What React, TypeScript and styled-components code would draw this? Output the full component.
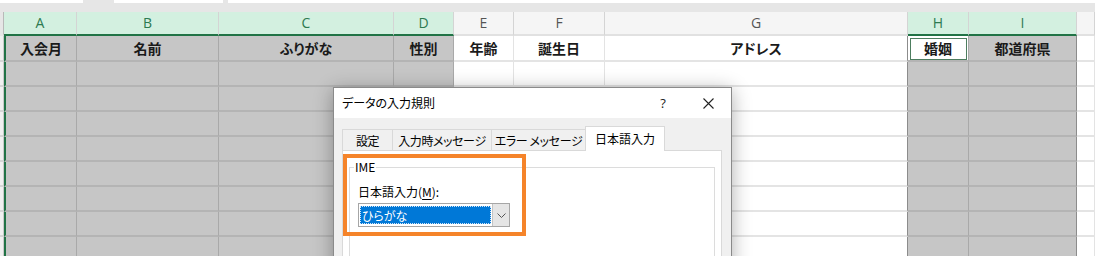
import React from "react";
import styled, { createGlobalStyle, css } from "styled-components";

const Global = createGlobalStyle`
  html, body { margin: 0; padding: 0; background: #ffffff; }
  body {
    width: 1095px; height: 256px; overflow: hidden;
    font-family: "Noto Sans CJK JP", "Noto Sans", sans-serif;
  }
  * { box-sizing: border-box; }
`;

type Col = {
  id: string;
  w: number;
  sel?: boolean;
  label?: string;
  first?: boolean;
  edgeRight?: boolean;
  active?: boolean;
  stub?: boolean;
};

const COLS: Col[] = [
  { id: "", w: 4, stub: true },
  { id: "A", w: 73, sel: true, label: "入会月", first: true },
  { id: "B", w: 142, sel: true, label: "名前" },
  { id: "C", w: 175, sel: true, label: "ふりがな" },
  { id: "D", w: 60, sel: true, label: "性別" },
  { id: "E", w: 60, label: "年齢" },
  { id: "F", w: 91, label: "誕生日" },
  { id: "G", w: 303, label: "アドレス", edgeRight: true },
  { id: "H", w: 61, sel: true, label: "婚姻", active: true },
  { id: "I", w: 108, sel: true, label: "都道府県", edgeRight: true },
  { id: "", w: 18 },
];

const Page = styled.div`
  position: relative;
  width: 1095px;
  height: 256px;
  overflow: hidden;
  background: #ffffff;
`;

const TopStrip = styled.div`
  height: 12px;
  background: #e6e6e6;
  display: flex;
  align-items: flex-start;
`;

const TopBox = styled.div<{ $w?: number; $gap?: number }>`
  height: 3px;
  background: #ffffff;
  margin-right: ${(p) => p.$gap ?? 0}px;
  ${(p) => (p.$w ? `width: ${p.$w}px;` : "flex: 1;")}
`;

const Grid = styled.div<{ $cols: string }>`
  display: grid;
  grid-template-columns: ${(p) => p.$cols};
  grid-template-rows: 24px 26px repeat(8, 25px);
`;

const HeadCell = styled.div<{ $sel?: boolean; $stub?: boolean }>`
  display: flex;
  align-items: center;
  justify-content: center;
  font-family: "Open Sans", "Noto Sans", sans-serif;
  font-size: 14px;
  padding-bottom: 1px;
  border-right: 1px solid #d4d4d4;
  ${(p) =>
    p.$stub
      ? css`
          background: #e6e6e6;
          border-right: 1px solid #b9b9b9;
          border-bottom: 2px solid #e6e6e6;
        `
      : p.$sel
      ? css`
          background: #d3f0e0;
          color: #2d7a50;
          border-bottom: 2px solid #217346;
        `
      : css`
          background: #f5f5f5;
          color: #555555;
          border-bottom: 2px solid #e1e1e1;
        `}
`;

const Cell = styled.div<{
  $tone: "gray" | "white" | "stub";
  $first?: boolean;
  $edge?: boolean;
  $active?: boolean;
}>`
  display: flex;
  align-items: center;
  justify-content: center;
  font-size: 14px;
  font-weight: 700;
  color: #1a1a1a;
  font-feature-settings: "palt";
  padding-bottom: 1px;
  ${(p) =>
    p.$tone === "gray"
      ? css`
          background: #c6c6c6;
          border-right: 1px solid #a9a9a9;
          border-bottom: 2px solid #b4b4b4;
        `
      : p.$tone === "stub"
      ? css`
          background: #f0f0f0;
          border-right: 1px solid #c9c9c9;
          border-bottom: 2px solid #d6d6d6;
        `
      : css`
          background: #ffffff;
          border-right: 1px solid #e3e3e3;
          border-bottom: 2px solid #e4e4e4;
        `}
  ${(p) => p.$first && css`border-left: 2px solid #217346;`}
  ${(p) => p.$edge && css`border-right: 1px solid #8c8c8c;`}
  ${(p) =>
    p.$active &&
    css`
      background: #ffffff;
      outline: 1px solid #4d7d5f;
      outline-offset: -3px;
    `}
`;

/* ---------- Dialog ---------- */

const Dialog = styled.div`
  position: absolute;
  left: 333px;
  top: 87px;
  width: 399px;
  height: 190px;
  background: #f0f0f0;
  border: 1px solid #8a8a8a;
  box-shadow: 0 3px 18px rgba(0, 0, 0, 0.32);
  font-family: "Noto Sans CJK JP", "Noto Sans", sans-serif;
  font-size: 12px;
  font-feature-settings: "palt";
  color: #000;
`;

const TitleBar = styled.div`
  height: 30px;
  background: #ffffff;
  display: flex;
  align-items: center;
  padding-left: 8px;
`;

const Title = styled.div`
  flex: 1;
  padding-bottom: 1px;
`;

const TitleBtn = styled.div<{ $w: number }>`
  width: ${(p) => p.$w}px;
  height: 30px;
  display: flex;
  align-items: center;
  justify-content: center;
  font-family: "Open Sans", sans-serif;
  font-size: 13px;
  color: #222;
`;

const Body = styled.div`
  padding: 9px 9px 0 8px;
`;

const TabList = styled.div`
  display: flex;
  align-items: flex-end;
  height: 23px;
`;

const Tab = styled.div<{ $w: number; $on?: boolean }>`
  width: ${(p) => p.$w}px;
  display: flex;
  align-items: center;
  justify-content: center;
  letter-spacing: -0.4px;
  white-space: nowrap;
  border: 1px solid #d9d9d9;
  border-bottom: none;
  ${(p) =>
    p.$on
      ? css`
          height: 25px;
          background: #ffffff;
          margin-bottom: -1px;
          position: relative;
          z-index: 1;
          padding-bottom: 2px;
          letter-spacing: 0;
        `
      : css`
          height: 21px;
          background: #f0f0f0;
          margin-right: -1px;
          padding-top: 1px;
        `}
`;

const Panel = styled.div`
  background: #ffffff;
  border: 1px solid #d9d9d9;
  height: 140px;
  padding: 8px 6px 0 6px;
`;

const Group = styled.fieldset`
  margin: 0;
  padding: 0 0 0 8px;
  border: 1px solid #dcdcdc;
  min-height: 110px;
`;

const Legend = styled.legend`
  padding: 0 1px;
  margin-left: -4px;
  line-height: 16px;
`;

const FieldLabel = styled.div`
  margin-top: 9px;
  line-height: 16px;
`;

const Underline = styled.span`
  text-decoration: underline;
  text-underline-offset: 2px;
`;

const Combo = styled.div`
  margin-top: 3px;
  width: 152px;
  height: 24px;
  border: 1px solid #a6a6a6;
  background: #ffffff;
  display: flex;
  align-items: stretch;
`;

const ComboValue = styled.div`
  flex: 1;
  margin: 2px 1px 2px 1px;
  background: #0078d7;
  color: #ffffff;
  display: flex;
  align-items: center;
  padding-left: 2px;
  outline: 1px dotted #cfe3f7;
  outline-offset: -1px;
`;

const ComboButton = styled.div`
  width: 17px;
  background: #e5e5e5;
  border-left: 1px solid #c4c4c4;
  display: flex;
  align-items: center;
  justify-content: center;
`;

const Highlight = styled.div`
  position: absolute;
  left: 9px;
  top: 66px;
  width: 183px;
  height: 82px;
  border: 4px solid #f5842a;
  pointer-events: none;
`;

export default function App() {
  const template = COLS.map((c) => `${c.w}px`).join(" ");
  const rows = Array.from({ length: 8 });

  return (
    <Page>
      <Global />
      <TopStrip>
        <TopBox $w={83} $gap={31} />
        <TopBox $w={109} $gap={5} />
        <TopBox />
      </TopStrip>
      <Grid $cols={template}>
        {COLS.map((c, i) => (
          <HeadCell key={`h${i}`} $sel={c.sel} $stub={c.stub}>
            {c.id}
          </HeadCell>
        ))}
        {COLS.map((c, i) => (
          <Cell
            key={`r1${i}`}
            $tone={c.stub ? "stub" : c.sel ? "gray" : "white"}
            $first={c.first}
            $edge={c.edgeRight}
            $active={c.active}
          >
            {c.label}
          </Cell>
        ))}
        {rows.map((_, r) =>
          COLS.map((c, i) => (
            <Cell
              key={`r${r}c${i}`}
              $tone={c.stub ? "stub" : c.sel ? "gray" : "white"}
              $first={c.first}
              $edge={c.edgeRight}
            />
          ))
        )}
      </Grid>

      <Dialog>
        <TitleBar>
          <Title>データの入力規則</Title>
          <TitleBtn $w={32}>?</TitleBtn>
          <TitleBtn $w={6} />
          <TitleBtn $w={46}>
            <svg width="11" height="11" viewBox="0 0 11 11">
              <path d="M0.5 0.5 L10.5 10.5 M10.5 0.5 L0.5 10.5" stroke="#222" strokeWidth="1.1" fill="none" />
            </svg>
          </TitleBtn>
        </TitleBar>
        <Body>
          <TabList>
            <Tab $w={51}>設定</Tab>
            <Tab $w={100}>入力時メッセージ</Tab>
            <Tab $w={95}>エラー メッセージ</Tab>
            <Tab $w={80} $on>
              日本語入力
            </Tab>
          </TabList>
          <Panel>
            <Group>
              <Legend>IME</Legend>
              <FieldLabel>
                日本語入力(<Underline>M</Underline>):
              </FieldLabel>
              <Combo>
                <ComboValue>ひらがな</ComboValue>
                <ComboButton>
                  <svg width="9" height="5" viewBox="0 0 9 5">
                    <path d="M0.5 0.5 L4.5 4.5 L8.5 0.5" stroke="#555" strokeWidth="1" fill="none" />
                  </svg>
                </ComboButton>
              </Combo>
            </Group>
          </Panel>
        </Body>
        <Highlight />
      </Dialog>
    </Page>
  );
}
